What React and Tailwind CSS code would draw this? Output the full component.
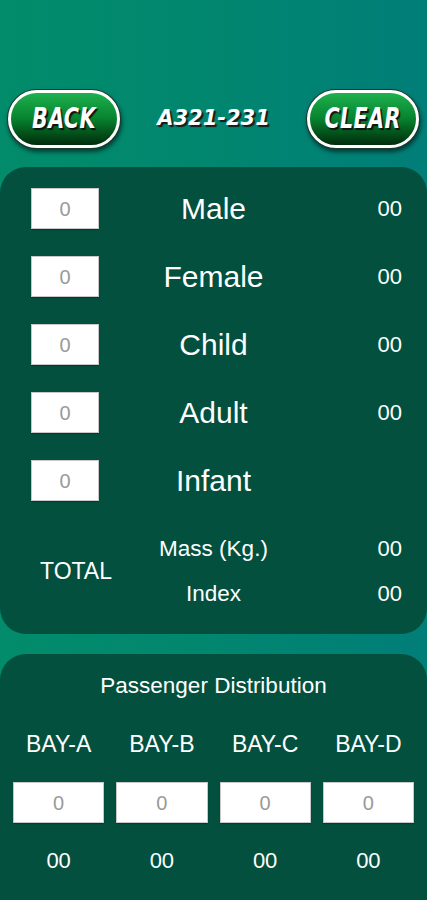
import React from "react";

const sans = { fontFamily: '"Liberation Sans", Arial, sans-serif' };

function PillButton({ label }) {
  return (
    <div className="w-[114px] h-[60px] rounded-full p-[1px] shadow-[1px_3px_4px_rgba(0,0,0,0.55)] bg-[#1b3a2a]">
      <div className="w-full h-full rounded-full border-[3px] border-white bg-gradient-to-b from-[#1db14e] via-[#07822e] to-[#012d0c] flex items-center justify-center">
        <span
          className="text-white text-[28px] font-bold italic tracking-[0.5px] [text-shadow:2px_2px_1px_#111] scale-x-[0.82]"
          style={{ fontFamily: '"Liberation Sans Narrow", "DejaVu Sans Condensed", "Liberation Sans", sans-serif' }}
        >
          {label}
        </span>
      </div>
    </div>
  );
}

function Box({ className = "" }) {
  return (
    <div
      className={`h-[41px] bg-white border border-[#c8c8c8] shadow-[0_1px_1px_rgba(0,0,0,0.25)] flex items-center justify-center text-[20px] text-[#9a9a9a] ${className}`}
      style={sans}
    >
      0
    </div>
  );
}

export default function App() {
  const rows = [
    ["Male", "00"],
    ["Female", "00"],
    ["Child", "00"],
    ["Adult", "00"],
    ["Infant", ""],
  ];
  const bays = ["BAY-A", "BAY-B", "BAY-C", "BAY-D"];
  return (
    <div
      className="w-full h-[900px] overflow-hidden bg-gradient-to-r from-[#028c6b] via-[#01866f] to-[#017e78] flex flex-col text-white"
      style={sans}
    >
      {/* header */}
      <div className="pt-[89px] px-[7px] flex items-center justify-between">
        <PillButton label="BACK" />
        <span
          className="text-white text-[21px] font-bold italic [text-shadow:2px_2px_1px_#1a1a1a]"
          style={{ fontFamily: '"DejaVu Sans", sans-serif' }}
        >
          A321-231
        </span>
        <PillButton label="CLEAR" />
      </div>

      {/* main panel */}
      <div className="mt-[18px] rounded-[26px] bg-[#03503f] pt-[21px] pb-[18px] flex flex-col">
        <div className="flex flex-col gap-[27px]">
          {rows.map(([label, val]) => (
            <div key={label} className="grid grid-cols-[130px_1fr_130px] items-center h-[41px]">
              <div className="pl-[31px]">
                <Box className="w-[68px]" />
              </div>
              <div className="text-center text-[30px] leading-none">{label}</div>
              <div className="text-right pr-[25px] text-[22px] leading-none">{val}</div>
            </div>
          ))}
        </div>
        <div className="mt-[25px] grid grid-cols-[130px_1fr_130px] items-center">
          <div className="pl-[40px] text-[23px]">TOTAL</div>
          <div className="flex flex-col items-center text-[22.5px]">
            <div className="h-[45px] flex items-center">Mass (Kg.)</div>
            <div className="h-[45px] flex items-center">Index</div>
          </div>
          <div className="flex flex-col items-end pr-[25px] text-[22px]">
            <div className="h-[45px] flex items-center">00</div>
            <div className="h-[45px] flex items-center">00</div>
          </div>
        </div>
      </div>

      {/* distribution panel */}
      <div className="mt-[20px] flex-1 rounded-t-[26px] bg-[#03503f] pt-[19px] flex flex-col">
        <div className="h-[26px] flex items-center justify-center text-[22.5px]">Passenger Distribution</div>
        <div className="mt-[32px] grid grid-cols-4 gap-x-[12px] px-[13px]">
          {bays.map((b) => (
            <div key={b} className="h-[26px] flex items-center justify-center text-[23px]">{b}</div>
          ))}
        </div>
        <div className="mt-[25px] grid grid-cols-4 gap-x-[12px] px-[13px]">
          {bays.map((b) => (
            <Box key={b} className="w-full" />
          ))}
        </div>
        <div className="mt-[24px] grid grid-cols-4 gap-x-[12px] px-[13px]">
          {bays.map((b) => (
            <div key={b} className="h-[26px] flex items-center justify-center text-[22px]">00</div>
          ))}
        </div>
      </div>
    </div>
  );
}
